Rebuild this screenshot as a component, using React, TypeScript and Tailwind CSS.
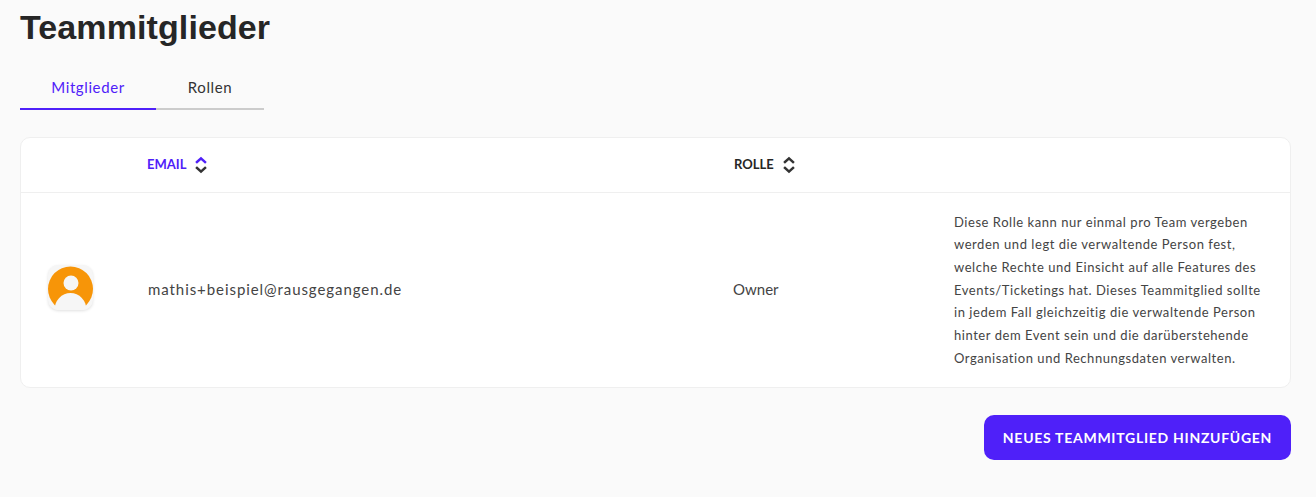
import React from "react";

const Sort = ({ top, bottom }: { top: string; bottom: string }) => (
  <svg width="12" height="18" viewBox="0 0 12 18" fill="none" strokeWidth="2.5" strokeLinecap="square" className="block">
    <path d="M2 6 L6 2.4 L10 6" stroke={top} />
    <path d="M2 12 L6 15.6 L10 12" stroke={bottom} />
  </svg>
);

export default function App() {
  return (
    <div className="h-[497px] bg-[#fafafa] pl-5 pr-[25px] font-['Lato',sans-serif] overflow-hidden">
      <h1 className="h-[54px] pt-[8px] text-[34px] leading-[38px] font-bold text-[#262626] font-['Liberation_Sans',sans-serif] tracking-[0.1px]">
        Teammitglieder
      </h1>
      <div className="flex mt-[16px] w-[244px] h-[40px]">
        <div className="w-[136px] border-b-2 border-[#4f20f9] text-[#4f20f9] text-[15px] tracking-[0.6px] flex items-center justify-center pb-[4px]">
          Mitglieder
        </div>
        <div className="w-[108px] border-b-2 border-[#cccccc] text-[#333] text-[15px] tracking-[0.6px] flex items-center justify-center pb-[4px]">
          Rollen
        </div>
      </div>
      <div className="mt-[27px] bg-white border border-[#efefef] rounded-[10px] h-[251px] flex flex-col">
        <div className="h-[55px] border-b border-[#efefef] flex items-center text-[13px] font-bold shrink-0">
          <div className="w-[126px]" />
          <div className="w-[587px] flex items-center gap-[9px] text-[#4f20f9]">
            <span>EMAIL</span>
            <Sort top="#4f20f9" bottom="#333333" />
          </div>
          <div className="flex items-center gap-[9px] text-[#262626]">
            <span>ROLLE</span>
            <Sort top="#333333" bottom="#333333" />
          </div>
        </div>
        <div className="flex-1 flex items-center">
          <div className="w-[126px] pl-[27px]">
            <div className="w-[45px] h-[45px] mb-[5px] rounded-[10px] bg-[#f6f6f6] shadow-[0_1px_3px_rgba(0,0,0,0.12)] overflow-hidden">
              <svg width="45" height="45" viewBox="0 0 45 45" className="block">
                <circle cx="22.5" cy="24" r="22.5" fill="#f79508" />
                <circle cx="23" cy="18" r="7.5" fill="#f6f6f6" />
                <ellipse cx="22.5" cy="45" rx="16" ry="17" fill="#f6f6f6" />
              </svg>
            </div>
          </div>
          <div className="w-[586px] pb-[1px] pl-[1px] text-[15px] tracking-[0.93px] text-[#444]">mathis+beispiel@rausgegangen.de</div>
          <div className="w-[221px] pb-[1px] text-[15px] text-[#444]">Owner</div>
          <div className="w-[320px] text-[13px] leading-[22.7px] tracking-[0.55px] text-[#444]">
            <div>Diese Rolle kann nur einmal pro Team vergeben</div>
            <div>werden und legt die verwaltende Person fest,</div>
            <div>welche Rechte und Einsicht auf alle Features des</div>
            <div>Events/Ticketings hat. Dieses Teammitglied sollte</div>
            <div>in jedem Fall gleichzeitig die verwaltende Person</div>
            <div>hinter dem Event sein und die darüberstehende</div>
            <div>Organisation und Rechnungsdaten verwalten.</div>
          </div>
        </div>
      </div>
      <div className="flex justify-end mt-[27px]">
        <button className="w-[307px] h-[45px] rounded-[10px] bg-[#4f20f9] text-white text-[14px] font-bold tracking-[0.72px] flex items-center justify-center">
          NEUES TEAMMITGLIED HINZUFÜGEN
        </button>
      </div>
    </div>
  );
}
